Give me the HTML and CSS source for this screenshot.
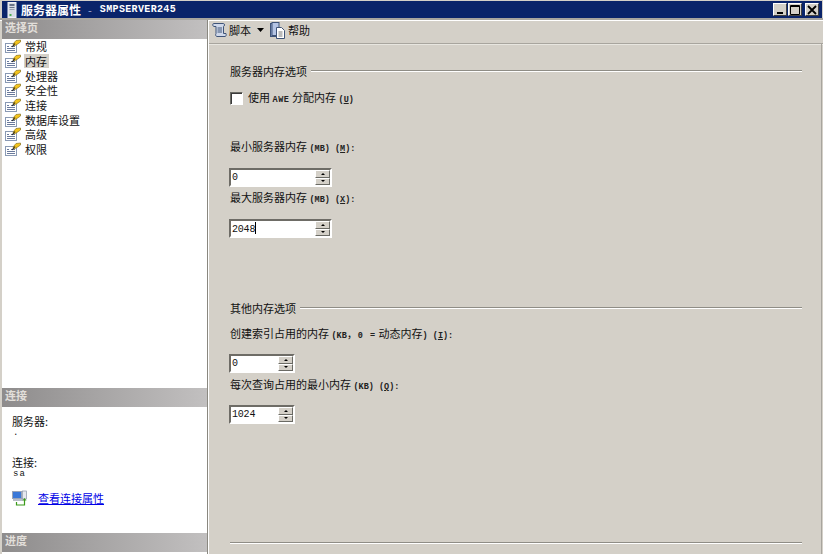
FILE: index.html
```html
<!DOCTYPE html>
<html lang="zh">
<head>
<meta charset="utf-8">
<title>服务器属性</title>
<link rel="stylesheet" href="styles.css">
</head>
<body>
<svg width="0" height="0" class="defs">
  <symbol id="page" viewBox="0 0 16 14">
    <rect x="0.5" y="4.500" width="11" height="9" fill="#fff" stroke="#8a9ab4"/>
    <path d="M2 7.500h2M2 9.500h8M2 11.500h8M6 7.500h4" stroke="#6a7a9c"/>
    <path d="M8 5 11 1.500 15.500 1v2L12 5.500 9 7z" fill="#f4c41c" stroke="#7a6414" stroke-width=".6"/>
    <path d="M7 8 10 4.500" stroke="#222" stroke-width="1.100"/>
  </symbol>
</svg>
<div class="window">
  <header class="titlebar">
    <svg class="server-icon" width="10" height="16" viewBox="0 0 10 16">
      <rect x="1" y="0.500" width="8" height="15" fill="#d8dce4" stroke="#f0f2f6"/>
      <rect x="2.500" y="2" width="5" height="2" fill="#6a7488"/>
      <rect x="2.500" y="5" width="5" height="1" fill="#6a7488"/>
      <rect x="2.500" y="7" width="5" height="1" fill="#98a0b0"/>
      <rect x="2.500" y="12" width="2" height="2" fill="#4caf50"/>
    </svg>
    <span class="title-cn">服务器属性</span>
    <span class="title-sep">-</span>
    <span class="title-host">SMPSERVER245</span>
    <div class="controls">
      <button class="ctl"><svg width="12" height="10" viewBox="0 0 12 10"><rect x="3" y="7" width="6" height="2" fill="#000"/></svg></button>
      <button class="ctl"><svg width="12" height="10" viewBox="0 0 12 10"><path d="M1.500.5h9v9h-9z" fill="none" stroke="#000"/><path d="M1 1.500h10" stroke="#000"/></svg></button>
      <button class="ctl ctl-close"><svg width="12" height="10" viewBox="0 0 12 10"><path d="M2 1l8 8M10 1l-8 8" stroke="#000" stroke-width="1.800"/></svg></button>
    </div>
  </header>
  <div class="body">
    <aside class="sidebar">
      <div class="band">选择页</div>
      <ul class="pages">
        <li class="page"><svg class="page-icon"><use href="#page"/></svg><span>常规</span></li>
        <li class="page"><svg class="page-icon"><use href="#page"/></svg><span class="current">内存</span></li>
        <li class="page"><svg class="page-icon"><use href="#page"/></svg><span>处理器</span></li>
        <li class="page"><svg class="page-icon"><use href="#page"/></svg><span>安全性</span></li>
        <li class="page"><svg class="page-icon"><use href="#page"/></svg><span>连接</span></li>
        <li class="page"><svg class="page-icon"><use href="#page"/></svg><span>数据库设置</span></li>
        <li class="page"><svg class="page-icon"><use href="#page"/></svg><span>高级</span></li>
        <li class="page"><svg class="page-icon"><use href="#page"/></svg><span>权限</span></li>
      </ul>
      <div class="band">连接</div>
      <div class="conn">
        <div class="conn-label">服务器:</div>
        <div class="conn-value">.</div>
        <div class="conn-label conn-gap">连接:</div>
        <div class="conn-value">sa</div>
        <div class="conn-link">
          <svg width="16" height="16" viewBox="0 0 16 16">
            <rect x="0.500" y="1.500" width="9" height="7" fill="#3a78d8" stroke="#9aa4b8"/>
            <rect x="1" y="9" width="10" height="2" fill="#b8bcc8"/>
            <rect x="10.500" y="1" width="4" height="8" fill="#e6e8ee" stroke="#8a94a8" stroke-width=".7"/>
            <path d="M4.500 12v3h8v-5" fill="none" stroke="#3a9a1a" stroke-width="1.200"/>
            <path d="M10.500 10.500 12.500 8l2 2.500z" fill="#3a9a1a"/>
          </svg>
          <a href="#">查看连接属性</a>
        </div>
      </div>
      <div class="band">进度</div>
    </aside>
    <main class="main">
      <div class="toolbar">
        <svg width="15" height="16" viewBox="0 0 15 16">
          <path d="M1.500 1.500h10c1.500 0 1 3 0 3v7h2.500c.5 1.500 0 3-1 3H5c-1 0-2-1.500-1-3V4.500H2C.5 4.500.5 1.500 1.500 1.500z" fill="#cfd8ea" stroke="#3f5478"/>
          <path d="M5.500 6h4.500M5.500 8h4.500M5.500 10h4.500" stroke="#3f5478"/>
        </svg>
        <span class="tool-label">脚本</span>
        <svg class="caret" width="7" height="4" viewBox="0 0 7 4"><path d="M0 0h7L3.500 4z" fill="#000"/></svg>
        <svg class="tool-help" width="16" height="17" viewBox="0 0 16 17">
          <rect x="0.500" y="1.500" width="8" height="13" fill="#8fa3cf" stroke="#3f5478"/>
          <rect x="2" y="0.500" width="7" height="13" fill="#b4c4e4" stroke="#3f5478"/>
          <path d="M6.500 5.500h5l3 3v8h-8z" fill="#fff" stroke="#3f5478"/>
          <path d="M8.500 10h4M8.500 12h4M8.500 14h4" stroke="#777"/>
        </svg>
        <span class="tool-label">帮助</span>
      </div>
      <div class="content">
        <section class="group group-first">
          <div class="legend"><span>服务器内存选项</span><i class="rule"></i></div>
          <label class="check"><span class="box"></span><span>使用 <b class="latin latin-awe">AWE</b> 分配内存 <b class="latin">(<u>U</u>)</b></span></label>
          <div class="field-label label-a">最小服务器内存 <b class="latin">(MB) (<u>M</u>):</b></div>
          <div class="spin spin-wide"><span class="spin-val">0</span><span class="spin-btns"><span class="sb"><i class="up"></i></span><span class="sb"><i class="down"></i></span></span></div>
          <div class="field-label label-b">最大服务器内存 <b class="latin">(MB) (<u>X</u>):</b></div>
          <div class="spin spin-wide"><span class="spin-val caret-val">2048</span><span class="spin-btns"><span class="sb"><i class="up"></i></span><span class="sb"><i class="down"></i></span></span></div>
        </section>
        <section class="group group-second">
          <div class="legend"><span>其他内存选项</span><i class="rule"></i></div>
          <div class="field-label label-c">创建索引占用的内存 <b class="latin">(KB</b>，<b class="latin latin-zero">0 =</b> 动态内存<b class="latin">) (<u>I</u>):</b></div>
          <div class="spin spin-narrow"><span class="spin-val">0</span><span class="spin-btns"><span class="sb"><i class="up"></i></span><span class="sb"><i class="down"></i></span></span></div>
          <div class="field-label label-d">每次查询占用的最小内存 <b class="latin">(KB) (<u>Q</u>):</b></div>
          <div class="spin spin-narrow"><span class="spin-val">1024</span><span class="spin-btns"><span class="sb"><i class="up"></i></span><span class="sb"><i class="down"></i></span></span></div>
        </section>
        <div class="bottom-rule"></div>
      </div>
    </main>
  </div>
</div>
</body>
</html>
```
FILE: styles.css
```css
* { box-sizing: border-box; }
html, body { margin: 0; padding: 0; height: 100%; overflow: hidden; }
body {
  background: #d4d0c8;
  font-family: "Noto Sans CJK SC", "Liberation Sans", sans-serif;
  font-size: 11px;
  line-height: 14px;
  color: #111;
}
.defs { position: absolute; }
.window { display: flex; flex-direction: column; height: 554px; padding-top: 1px; }
.titlebar {
  flex: none;
  height: 17px;
  margin: 0 1px 0 2px;
  background: #0a246a;
  color: #fff;
  display: flex;
  align-items: center;
  padding: 0 3px 0 5px;
}
.server-icon { margin-right: 4px; }
.title-cn { font-weight: 700; font-size: 12px; }
.title-sep { margin: 0 8px 0 7px; color: #a8b4d8; }
.title-host { font-family: "Liberation Mono", monospace; font-size: 10px; font-weight: 700; letter-spacing: 0.35px; }
.controls { margin-left: auto; display: flex; gap: 1px; }
.ctl {
  width: 14px; height: 13px; padding: 0;
  background: #d4d0c8;
  border: 1px solid;
  border-color: #fff #404040 #404040 #fff;
  display: flex; align-items: center; justify-content: center;
}
.ctl-close { margin-left: 2px; }
.body { flex: 1; display: flex; min-height: 0; border-top: 2px solid #a8a59e; box-shadow: inset 0 1px 0 #fff; }
.sidebar {
  flex: none;
  width: 206px;
  margin-left: 2px;
  background: #fff;
  display: flex;
  flex-direction: column;
  border-right: 1px solid #8a8880;
}
.band {
  flex: none;
  height: 19px;
  padding-left: 3px;
  font-weight: 700;
  line-height: 15px;
  color: #e2dfda;
  background: linear-gradient(90deg, #8e8c8c, #c2c0c0);
}
.pages { list-style: none; margin: 0; padding: 0 0 0 3px; height: 349px; }
.page { display: flex; align-items: center; height: 14.700px; }
.page-icon { width: 16px; height: 14px; margin-right: 3px; flex: none; }
.page span { padding: 0 2px 0 1px; line-height: 14px; }
.page .current { background: #d4d0c8; }
.conn { height: 126px; padding: 7px 0 0 10px; }
.conn-label { height: 14px; }
.conn-value { height: 12px; font-family: "Liberation Mono", monospace; font-size: 9px; line-height: 11px; letter-spacing: 1px; padding-left: 1px; }
.conn-gap { margin-top: 15px; }
.conn-link { display: flex; align-items: center; margin-top: 9px; gap: 10px; }
.conn-link a { color: #0000e6; }
.main { flex: 1; display: flex; flex-direction: column; min-width: 0; border-left: 1px solid #fff; }
.toolbar {
  flex: none;
  height: 24px;
  display: flex;
  align-items: center;
  padding: 0 0 3px 3px;
  border-bottom: 1px solid #a8a59e;
  box-shadow: 0 1px 0 #e8e6e0;
}
.tool-label { margin-left: 2px; }
.caret { margin-left: 6px; }
.tool-help { margin-left: 6px; }
.content { flex: 1; padding: 20px 19px 0 21px; margin-right: 1px; border-right: 1px solid #a8a59e; display: flex; flex-direction: column; }
.legend { display: flex; align-items: center; height: 14px; gap: 4px; }
.rule { flex: 1; height: 2px; background: #8f8d86; border-bottom: 1px solid #fff; }
.check { display: flex; align-items: center; gap: 5px; margin-top: 13px; height: 14px; }
.box { width: 13px; height: 13px; background: #fff; border: 1px solid; border-color: #6a6a64 #fff #fff #6a6a64; box-shadow: inset 1px 1px 0 #3a3a3a; }
.latin { font-family: "Liberation Mono", monospace; font-weight: 700; font-size: 8.500px; color: #222; }
.latin-awe { letter-spacing: 0.6px; }
.latin-zero { letter-spacing: 1px; }
.field-label { height: 14px; }
.label-a { margin-top: 34px; }
.label-b { margin-top: 3px; }
.label-c { margin-top: 11px; }
.label-d { margin-top: 4px; }
.spin {
  margin-top: 15px;
  height: 19px;
  display: flex;
  align-items: center;
  background: #fff;
  border: 2px solid;
  border-color: #6e6c66 #fff #fff #6e6c66;
  margin-left: -1px;
}
.spin-wide { width: 103px; }
.spin-narrow { width: 66px; margin-top: 14px; }
.spin-val { flex: 1; font-family: "Liberation Mono", monospace; font-size: 10px; padding-left: 1px; line-height: 13px; letter-spacing: -0.2px; }
.caret-val::after { content: ""; display: inline-block; width: 1px; height: 12px; background: #000; vertical-align: -2px; }
.spin-btns { flex: none; width: 15px; height: 15px; display: flex; flex-direction: column; }
.sb {
  flex: 1;
  background: #d4d0c8;
  border: 1px solid;
  border-color: #fff #6a6a64 #6a6a64 #fff;
  display: flex; align-items: center; justify-content: center;
}
.up, .down { width: 0; height: 0; border-left: 2px solid transparent; border-right: 2px solid transparent; }
.up { border-bottom: 2px solid #000; }
.down { border-top: 2px solid #000; }
.group-second { margin-top: 63px; }
.bottom-rule { height: 2px; background: #8f8d86; border-bottom: 1px solid #fff; margin-top: 118px; }
```
